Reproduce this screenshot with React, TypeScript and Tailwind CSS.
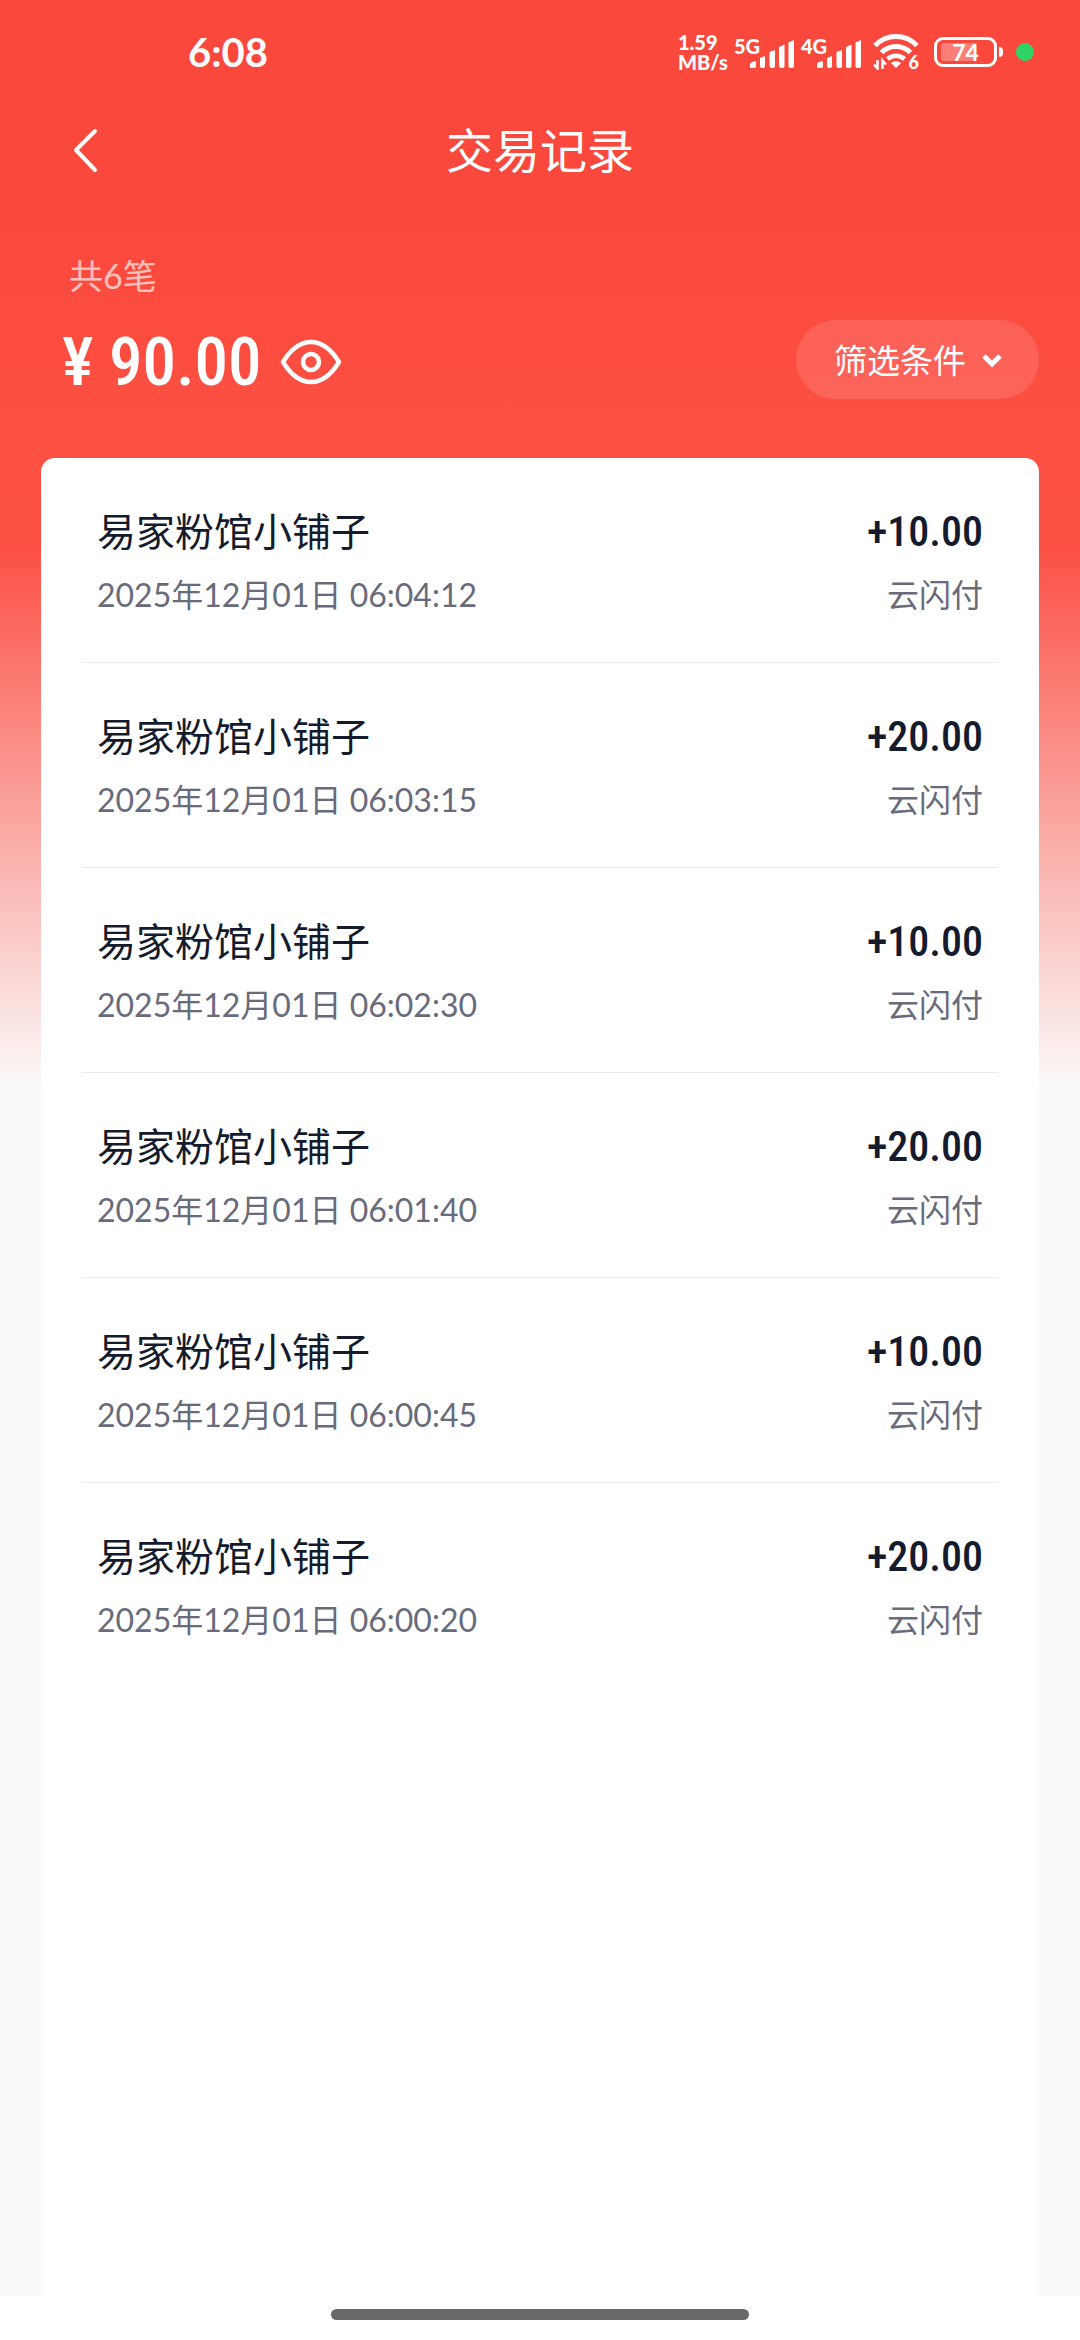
import { useState } from "react";

type Transaction = {
  id: number;
  merchant: string;
  time: string;
  amount: string;
  channel: string;
};

const transactions: Transaction[] = [
  { id: 1, merchant: "易家粉馆小铺子", time: "2025年12月01日 06:04:12", amount: "+10.00", channel: "云闪付" },
  { id: 2, merchant: "易家粉馆小铺子", time: "2025年12月01日 06:03:15", amount: "+20.00", channel: "云闪付" },
  { id: 3, merchant: "易家粉馆小铺子", time: "2025年12月01日 06:02:30", amount: "+10.00", channel: "云闪付" },
  { id: 4, merchant: "易家粉馆小铺子", time: "2025年12月01日 06:01:40", amount: "+20.00", channel: "云闪付" },
  { id: 5, merchant: "易家粉馆小铺子", time: "2025年12月01日 06:00:45", amount: "+10.00", channel: "云闪付" },
  { id: 6, merchant: "易家粉馆小铺子", time: "2025年12月01日 06:00:20", amount: "+20.00", channel: "云闪付" },
];

function Signal({ label }: { label: string }) {
  return (
    <div className="flex items-start">
      <span className="w-7 text-[20px] leading-5 font-black">{label}</span>
      <svg className="-ml-3 mt-1 h-7 w-11" viewBox="0 0 44 28" fill="currentColor">
        <path d="M0 28v-3a3 3 0 0 1 2-3l4-1v5a2 2 0 0 1-2 2z" />
        <path d="M10 18l5-2v10a2 2 0 0 1-2 2h-1a2 2 0 0 1-2-2z" />
        <path d="M19.500 12l5.500-2v16a2 2 0 0 1-2 2h-1.500a2 2 0 0 1-2-2z" />
        <path d="M29 7l5.500-2.500V26a2 2 0 0 1-2 2H31a2 2 0 0 1-2-2z" />
        <path d="M38.500 2.500L44 0v26a2 2 0 0 1-2 2h-1.500a2 2 0 0 1-2-2z" />
      </svg>
    </div>
  );
}

function WifiIcon() {
  return (
    <div className="relative h-9 w-[46px]">
      <svg className="h-9 w-[46px]" viewBox="0 0 46 36" fill="none" stroke="currentColor">
        <path d="M2 11.500C13.500-.5 32.500-.5 44 11.500" strokeWidth="5" />
        <path d="M8.500 18.500c8-8 21-8 29 0" strokeWidth="5" />
        <path d="M14.500 25c5-4.500 12-4.500 17 0" strokeWidth="4.500" />
        <path d="M18 29c3-2.300 7-2.300 10 0L23 34z" fill="currentColor" stroke="none" />
        <path d="M4.500 26v8.500L1 30.500M9.500 35v-8.500l3.500 4" strokeWidth="2.500" />
      </svg>
      <span className="absolute right-0 bottom-0 text-[18px] leading-4 font-black">6</span>
    </div>
  );
}

function Battery() {
  return (
    <div className="flex items-center gap-[2px]">
      <div className="relative flex h-[30px] w-[63px] items-center justify-center rounded-[9px] border-[3px] border-white">
        <div className="absolute top-[3px] bottom-[3px] left-1 w-9 rounded-[3px] bg-white/30" />
        <span className="relative text-[23px] leading-6 font-bold">74</span>
      </div>
      <div className="h-[10px] w-1 rounded-r-sm bg-white" />
    </div>
  );
}

function StatusBar() {
  return (
    <div className="flex h-[104px] items-center justify-between pr-[46px] pl-[188px]">
      <span className="text-[40px] leading-10 font-bold">6:08</span>
      <div className="flex items-center">
        <div className="mr-1 w-[52px] text-[20px] leading-5 font-black">
          <div>1.59</div>
          <div>MB/s</div>
        </div>
        <div className="mr-3 flex gap-[7px]">
          <Signal label="5G" />
          <Signal label="4G" />
        </div>
        <WifiIcon />
        <div className="ml-[15px]">
          <Battery />
        </div>
        <div className="ml-[13px] h-[18px] w-[18px] rounded-full bg-[#2fd365]" />
      </div>
    </div>
  );
}

export default function App() {
  const [visible, setVisible] = useState(true);

  return (
    <div className="flex min-h-screen flex-col bg-[#fafafa] bg-[linear-gradient(#fa483c_0px,#fb483c_220px,#fd5144_460px,#fb5146_550px,#fafafa_1090px)] font-['Lato','Noto_Sans_CJK_SC',sans-serif] text-white">
      <StatusBar />

      <header className="grid h-[92px] grid-cols-[1fr_auto_1fr] items-center px-16">
        <button type="button" aria-label="返回" className="justify-self-start">
          <svg className="h-12 w-10" viewBox="0 0 40 48" fill="none" stroke="currentColor" strokeWidth="4" strokeLinecap="round" strokeLinejoin="round">
            <path d="M31 5L12 24l19 20" />
          </svg>
        </button>
        <h1 className="text-[47px] leading-[64px]">交易记录</h1>
      </header>

      <section className="flex items-end justify-between pt-14 pr-[41px] pb-[59px] pl-[62px]">
        <div>
          <p className="pl-[7px] text-[34px] leading-12 text-white/65">共6笔</p>
          <div className="mt-6 flex h-[75px] items-center gap-[18px]">
            <span className="font-['Roboto_Condensed','Roboto',sans-serif] text-[67px] leading-[76px] font-medium">
              {visible ? "¥ 90.00" : "¥ ****"}
            </span>
            <button type="button" aria-label="显示或隐藏金额" onClick={() => setVisible(!visible)}>
              <svg className="h-12 w-[62px]" viewBox="0 0 62 48" fill="none" stroke="currentColor" strokeWidth="4.500">
                <path d="M3 24C11 11 20 4 31 4s20 7 28 20c-8 13-17 20-28 20S11 37 3 24z" strokeLinejoin="round" />
                <circle cx="31" cy="24" r="8" />
              </svg>
            </button>
          </div>
        </div>
        <button type="button" className="flex h-[79px] items-center gap-4 rounded-full bg-white/12 pr-[37px] pl-[38px] text-[33px] leading-10">
          筛选条件
          <svg className="h-4 w-5" viewBox="0 0 20 16" fill="none" stroke="currentColor" strokeWidth="5">
            <path d="M2 4l8 8 8-8" />
          </svg>
        </button>
      </section>

      <main className="mx-[41px] flex-1 rounded-t-[14px] bg-white px-[41px]">
        <ul>
          {transactions.map((item) => (
            <li key={item.id} className="flex h-[205px] justify-between border-b border-[#ebebed] px-[15px] pt-[45px] last:border-b-0">
              <div>
                <p className="text-[39px] leading-[56px] text-[#141b2d]">{item.merchant}</p>
                <p className="mt-3 text-[32px] leading-12 text-[#686b7b]">{item.time}</p>
              </div>
              <div className="text-right">
                <p className="font-['Roboto_Condensed','Roboto',sans-serif] text-[42px] leading-[58px] font-medium text-[#141b2d]">{item.amount}</p>
                <p className="mt-[10px] text-[32px] leading-12 text-[#686b7b]">{item.channel}</p>
              </div>
            </li>
          ))}
        </ul>
      </main>

      <footer className="flex h-11 justify-center bg-white pt-[13px]">
        <div className="h-[11px] w-[418px] rounded-full bg-[#696969]" />
      </footer>
    </div>
  );
}
